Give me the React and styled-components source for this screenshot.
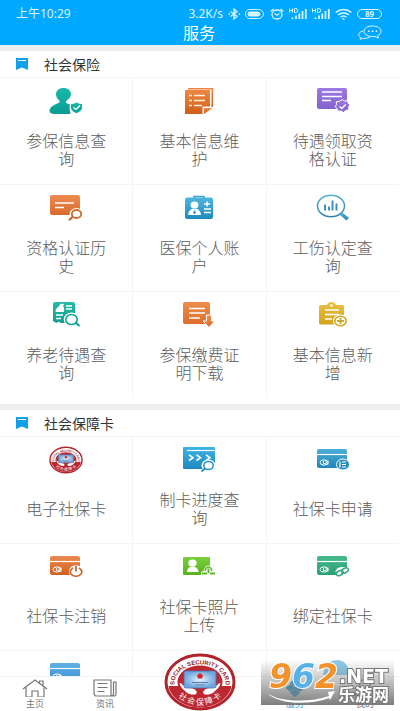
import React, { useId } from 'react';
import styled, { createGlobalStyle } from 'styled-components';

const colors = {
  primary: '#00a8ff',
  status: '#d9f6ff',
  page: '#eeeeee',
  line: '#f4f4f4',
  heading: '#333333',
  label: '#5c5c5c',
  tab: '#777777',
};

const GlobalStyle = createGlobalStyle`
  * {
    box-sizing: border-box;
  }
  body {
    margin: 0;
    font-family: 'Noto Sans CJK SC', 'Noto Sans', sans-serif;
  }
  button {
    border: 0;
    padding: 0;
    background: none;
    font: inherit;
    cursor: pointer;
  }
  svg {
    display: block;
    flex: none;
  }
`;

const StyledApp = styled.div`
  height: 100vh;
  display: flex;
  flex-direction: column;
  overflow: hidden;
  background: ${colors.page};
`;

const StyledHeader = styled.header`
  padding: 4px 18px 5px 16px;
  background: ${colors.primary};
  color: #fff;
`;

const StyledStatusBar = styled.div`
  height: 20px;
  display: flex;
  align-items: center;
  justify-content: space-between;
  color: ${colors.status};
  font-family: 'Noto Sans', 'Noto Sans CJK SC', sans-serif;
  font-size: 12px;
  line-height: 20px;
`;

const StyledStatusIcons = styled.div`
  display: flex;
  align-items: center;
  gap: 5px;
`;

const StyledBattery = styled.span`
  width: 25px;
  height: 10px;
  border: 1px solid ${colors.status};
  border-radius: 5px;
  font-size: 8px;
  font-weight: 700;
  line-height: 8px;
  text-align: center;
`;

const StyledTitleBar = styled.div`
  display: grid;
  grid-template-columns: 1fr auto 1fr;
  align-items: center;
  height: 16px;
`;

const StyledTitle = styled.h1`
  grid-column: 2;
  margin: 0;
  font-size: 16px;
  font-weight: 400;
  line-height: 16px;
`;

const StyledChatButton = styled.button`
  justify-self: end;
`;

const StyledMain = styled.main`
  flex: 1;
  min-height: 0;
  overflow-y: auto;
  scrollbar-width: none;
`;

const StyledSection = styled.section`
  margin-top: 6px;
  padding-bottom: 6px;
  background: #fff;
`;

const StyledSectionTitle = styled.h2`
  height: 26px;
  margin: 0;
  padding: 0 16px;
  display: flex;
  align-items: center;
  gap: 16px;
  color: ${colors.heading};
  font-size: 14px;
  font-weight: 400;
  line-height: 18px;
`;

const StyledGrid = styled.div`
  display: grid;
  grid-template-columns: repeat(3, 1fr);
  grid-auto-rows: 107px;
`;

const StyledService = styled.button`
  display: flex;
  flex-direction: column;
  align-items: center;
  padding: 9px 24px 0;
  border-top: 1px solid ${colors.line};
  border-right: 1px solid ${colors.line};
  &:nth-child(3n) {
    border-right-color: transparent;
  }
`;

const StyledLabel = styled.span`
  height: 68px;
  display: flex;
  align-items: center;
  color: ${colors.label};
  font-size: 16px;
  font-weight: 300;
  line-height: 18px;
`;

const StyledTabBar = styled.nav`
  position: relative;
  display: grid;
  grid-template-columns: 7fr 7fr 12fr 7fr 7fr;
  grid-template-rows: 34px;
  align-items: end;
  border-top: 1px solid ${colors.line};
  background: #fff;
`;

const StyledTab = styled.button`
  display: flex;
  flex-direction: column;
  align-items: center;
  color: ${({ $active }) => ($active ? '#1f9ed8' : colors.tab)};
  font-size: 9px;
  line-height: 14px;
`;

const StyledCardTab = styled.button`
  justify-self: center;
`;

const StyledWatermark = styled.div`
  position: fixed;
  right: 6px;
  bottom: 6px;
  pointer-events: none;
`;

const Fade = ({ id, from, to }) => (
  <linearGradient id={id} x1="0" y1="0" x2="0" y2="1">
    <stop offset="0" stopColor={from} />
    <stop offset="1" stopColor={to} />
  </linearGradient>
);

const Icon = ({ from, to, children }) => {
  const id = useId();
  return (
    <svg width="34" height="28" viewBox="0 0 34 28" fill="none" aria-hidden="true">
      <defs>
        <Fade id={id} from={from} to={to} />
      </defs>
      {children(`url(#${id})`)}
    </svg>
  );
};

const PersonIcon = () => (
  <Icon from="#19b9aa" to="#089c93">
    {fill => (
      <>
        <path
          d="M14.500 1C10 1 7 3.700 7 7.200c0 2.600 1.500 4.600 3.200 6.200.9.900.5 2-.7 2.500C4.500 18 .5 20 .5 24c0 2 2 3 5 3h16c-1-3-1-7.500-.5-9.500-2-.6-3.500-1.200-4-2-.4-.7 0-1.500.7-2.100C19.500 12 22 10 22 7.200 22 3.700 19 1 14.500 1z"
          fill={fill}
        />
        <path
          d="M27.500 15c2 1.300 4 1.700 6 1.700v3.500c0 3-2.500 5-6 6.300-3.500-1.300-6-3.300-6-6.300v-3.500c2 0 4-.4 6-1.700z"
          fill={fill}
          stroke="#fff"
          strokeWidth="1"
        />
        <path d="M24.500 20.500l2.500 2 4-4" stroke="#fff" strokeWidth="1.300" />
      </>
    )}
  </Icon>
);

const ListIcon = () => (
  <Icon from="#ee8741" to="#cf5f1b">
    {fill => (
      <>
        <path d="M6 1h25v19h-1.500V2.500H6z" fill={fill} />
        <path d="M3 3h25v16.500h-7.500V27H3z" fill={fill} />
        <path d="M22 21h8.500L22 27z" fill={fill} />
        <path
          d="M12 8.500h11M12 13.500h11M12 18.500h8M7 8.500h3M7 13.500h3M7 18.500h3"
          stroke="#fff0dc"
          strokeWidth="1.600"
        />
      </>
    )}
  </Icon>
);

const CertificateIcon = () => (
  <Icon from="#9c79e2" to="#8363cf">
    {fill => (
      <>
        <rect x="1" y="1" width="30" height="21" rx="2" fill={fill} />
        <path d="M6 5h20M6 9.500h20M6 13.500h9" stroke="#fff" strokeWidth="1.500" />
        <path
          d="M26.500 12.500l2 1.500 3-.5.5 2.500 2 2-1.300 2 .3 3-3 .4-2.500 2.100-2.500-1.500-3 .3-.7-2.700-2.300-1.900 1.500-2-.2-3 3-.3z"
          fill={fill}
          stroke="#fff"
        />
        <path d="M23.500 19.500l2.200 2 4-4" stroke="#fff" strokeWidth="1.300" />
      </>
    )}
  </Icon>
);

const HistoryIcon = () => (
  <Icon from="#ec8b50" to="#d96b2a">
    {fill => (
      <>
        <rect x="1" y="1" width="30" height="20" rx="2" fill={fill} />
        <path d="M6 9h19M6 13.500h9" stroke="#fff" strokeWidth="1.500" />
        <ellipse cx="27.500" cy="20" rx="7" ry="6" fill="#fff" />
        <ellipse cx="27.500" cy="20" rx="4.700" ry="4" stroke="#d06b2c" strokeWidth="1.800" />
        <path d="M23.500 23L20 26.300" stroke="#c9622a" strokeWidth="2.200" />
      </>
    )}
  </Icon>
);

const IdCardIcon = () => (
  <Icon from="#4fb5dd" to="#1e8abd">
    {fill => (
      <>
        <path d="M12 5V2.500h10V5" stroke="#3ea5d2" strokeWidth="1.600" />
        <rect x="3" y="3.500" width="28" height="21.500" rx="2" fill={fill} />
        <ellipse cx="12.500" cy="11" rx="4" ry="3.600" fill="#fff" />
        <path d="M6 21c.3-3.500 2.500-5.500 4.500-6.200h4c2.200.7 4.300 2.700 4.500 6.200z" fill="#fff" />
        <path d="M12.500 15.500l-1.500 3.300 1.500 1.500 1.500-1.500z" fill={fill} />
        <path d="M25 7.500v5M22 10h6M22 15h7M22 18.500h7" stroke="#fff" strokeWidth="1.500" />
      </>
    )}
  </Icon>
);

const InjuryIcon = () => (
  <Icon from="#57aed3" to="#2f86ae">
    {fill => (
      <>
        <ellipse cx="15" cy="12" rx="13.500" ry="10.800" stroke={fill} strokeWidth="1.500" />
        <path d="M24 20.500l2-1.500 6.500 4.800-2 2.200z" fill={fill} stroke={fill} />
        <path d="M9 10.500v6M13 12.500v4M16.500 6.500v10M20.500 9.500v7" stroke="#3b93bd" strokeWidth="2" />
      </>
    )}
  </Icon>
);

const PensionIcon = () => (
  <Icon from="#28bba7" to="#0d9e91">
    {fill => (
      <>
        <path d="M6 1h18a2 2 0 012 2v19H12l-2.500-1.500L7.500 22 4 20V3a2 2 0 012-2z" fill={fill} />
        <path
          d="M6.500 11c0-3 1.500-4.500 3.500-5.500 0-2 3-3.500 5-2.200l-1 1.700c1.500 1.500 1.200 3 1 6h-8z"
          fill="#fff"
        />
        <path d="M17 5h6M17 8h6M7 14h7M7 17.500h5" stroke="#fff" strokeWidth="1.300" />
        <ellipse cx="22.500" cy="18.500" rx="7.800" ry="7" fill="#fff" />
        <ellipse cx="22.500" cy="18.500" rx="5.700" ry="5" stroke="#12a295" strokeWidth="1.600" />
        <path d="M26.500 21.500l4 3.500" stroke="#12a295" strokeWidth="2.200" />
      </>
    )}
  </Icon>
);

const DownloadIcon = () => (
  <Icon from="#ee8e4c" to="#dd6d2b">
    {fill => (
      <>
        <rect x="1" y="1" width="27" height="22" rx="2" fill={fill} />
        <path d="M7 7.500h16M7 12h16M7 17h11" stroke="#fff" strokeWidth="1.600" />
        <path
          d="M24.500 14h5v6h3.500l-6 6.500-6-6.500h3.500z"
          fill={fill}
          stroke="#fff"
        />
      </>
    )}
  </Icon>
);

const AddIcon = () => (
  <Icon from="#e9c143" to="#d3a41f">
    {fill => (
      <>
        <path
          d="M5 4h6c1-1.800 2-3 4.500-3S19 2.200 20 4h6.500A1.500 1.500 0 0128 5.500v16a2 2 0 01-2 2H5a2 2 0 01-2-2v-15A2 2 0 015 4z"
          fill={fill}
        />
        <circle cx="15.500" cy="4.500" r="1.300" fill="#fff" />
        <path d="M9 9h14M9 13.500h14M9 18h7" stroke="#fff" strokeWidth="1.600" />
        <ellipse cx="24.500" cy="20" rx="7.600" ry="6.400" fill="#fff" />
        <ellipse cx="24.500" cy="20" rx="5.700" ry="4.800" stroke="#d2a523" strokeWidth="1.600" />
        <path d="M24.500 17v6M21 20h7" stroke="#d2a523" strokeWidth="1.800" />
      </>
    )}
  </Icon>
);

const ProgressIcon = () => (
  <Icon from="#3db4e2" to="#2088c2">
    {fill => (
      <>
        <rect x="1" y="1" width="32" height="22" rx="1" fill={fill} />
        <path d="M5 4.500h28" stroke="#fff" strokeWidth="1.200" />
        <path
          d="M7 9l4 2.700L7 14.500M14.500 9l4 2.700-4 2.800M24 9l4 2.700-4 2.800"
          stroke="#fff"
          strokeWidth="1.600"
        />
        <ellipse cx="26.500" cy="19.500" rx="7" ry="6" fill="#fff" />
        <ellipse cx="26.500" cy="19.500" rx="4.700" ry="4" stroke="#2992c5" strokeWidth="1.600" />
        <path d="M23 22.500l-3.500 3" stroke="#2992c5" strokeWidth="2" />
      </>
    )}
  </Icon>
);

const BankCardIcon = ({ from, to, children }) => (
  <Icon from={from} to={to}>
    {fill => (
      <>
        <rect x="1" y="3" width="30" height="19" rx="2" fill={fill} />
        <path d="M1 8.500h30" stroke="#fff" strokeWidth="1.200" />
        <ellipse cx="8" cy="16.500" rx="4" ry="2.600" stroke="#fff" />
        <path d="M7.500 15v2.500H10M9.500 14.500l2 4M12 14.500v4" stroke="#fff" strokeWidth=".9" />
        {children}
      </>
    )}
  </Icon>
);

const ApplyIcon = () => (
  <BankCardIcon from="#4ab0d8" to="#2384b8">
    <ellipse cx="27" cy="18.500" rx="6.500" ry="5.500" fill="#2a8bbd" stroke="#fff" />
    <path d="M24 15.500v6M26 16h4M26 18.500h4M26 21h4" stroke="#fff" strokeWidth="1.200" />
  </BankCardIcon>
);

const CancelIcon = () => (
  <BankCardIcon from="#e98a52" to="#d3601d">
    <ellipse cx="27" cy="18.500" rx="7.200" ry="6.300" fill="#fff" />
    <path d="M24 14.800c-6 4.200-1 8.400 3 8.400s9-4.200 3-8.400" stroke="#c9642b" strokeWidth="1.600" />
    <path d="M27 13v5.500" stroke="#c9642b" strokeWidth="1.800" />
  </BankCardIcon>
);

const BindIcon = () => (
  <BankCardIcon from="#46b98b" to="#27a274">
    <ellipse cx="26.500" cy="18.500" rx="7" ry="4.600" fill="#fff" />
    <g stroke="#3aa883" strokeWidth="1.500">
      <ellipse cx="23.800" cy="20" rx="3.700" ry="2.300" transform="rotate(-28 23.800 20)" />
      <ellipse cx="29" cy="17.500" rx="3.700" ry="2.300" transform="rotate(-28 29 17.500)" />
    </g>
  </BankCardIcon>
);

const PhotoIcon = () => (
  <Icon from="#79cf3c" to="#58b31f">
    {fill => (
      <>
        <rect x="1" y="4" width="27" height="18" rx="1" fill={fill} />
        <ellipse cx="10.500" cy="10" rx="4.200" ry="3.500" fill="#fff" />
        <path d="M5 19c0-3 2-5 4-5.500h3c2 .5 4.500 2.500 4.500 5.500z" fill="#fff" />
        <path d="M19 22v-3l3-1.500c0-3 2-5 4.500-5s4.500 2 4.500 5l2 1.500v3z" fill="#fff" />
        <path d="M23.500 18c-.5-2 1-4 3-4s3.500 2 3 4" stroke="#5fb62b" strokeWidth="1.500" />
        <path d="M26.500 20v-4.500M20 20.500h5M28 20.500h5" stroke="#5fb62b" strokeWidth="2" />
      </>
    )}
  </Icon>
);

const BlueCardIcon = () => <BankCardIcon from="#5fb0e4" to="#3a8fd0" />;

const Emblem = ({ width, height }) => {
  const id = useId();
  return (
    <svg
      width={width}
      height={height}
      viewBox="0 0 72 58"
      role="img"
      aria-label="社会保障卡"
    >
      <defs>
        <path id={`${id}top`} d="M11 34A25.500 19 0 1 1 61 34" />
        <path id={`${id}bottom`} d="M11 40A28.500 22.500 0 0 0 61 40" />
        <clipPath id={`${id}low`}>
          <path d="M0 33h72v25H0z" />
        </clipPath>
        <radialGradient id={`${id}card`}>
          <stop offset="0" stopColor="#e6f4fc" />
          <stop offset="1" stopColor="#6fa6dc" />
        </radialGradient>
      </defs>
      <ellipse cx="36" cy="29" rx="36" ry="29" fill="#fff" />
      <ellipse cx="36" cy="29" rx="34" ry="27" fill="#fff" stroke="#b2242c" strokeWidth="3" />
      <ellipse cx="36" cy="29" rx="32" ry="25.500" fill="#bd2730" clipPath={`url(#${id}low)`} />
      <ellipse
        cx="36"
        cy="29"
        rx="22.500"
        ry="16.500"
        fill="#bd2730"
      />
      <path
        d="M15.500 30c2 0 3 2 5 3.500 3 1.500 8 1 11 3.500 2 1.500 1.500 3 0 4.500-4 .5-8-.5-11-4-3-2-4.500-5-5-7.500zM56.500 30c-2 0-3 2-5 3.500-3 1.500-8 1-11 3.500-2 1.500-1.500 3 0 4.500 4 .5 8-.5 11-4 3-2 4.500-5 5-7.500z"
        fill="#fff"
      />
      <rect x="20" y="18" width="32" height="17" rx="2" fill={`url(#${id}card)`} stroke="#4773b5" strokeWidth=".8" />
      <path d="M36 20l3 2.500-1 3h-4l-1-3z" fill="#d5222c" />
      <path d="M28 29.500h16M31 32h10" stroke="#5b7fae" strokeWidth="1.200" />
      <text fill="#8f2026" fontFamily="Liberation Sans, sans-serif" fontSize="6" fontWeight="700">
        <textPath href={`#${id}top`} startOffset="50%" textAnchor="middle">
          SOCIAL SECURITY CARD
        </textPath>
      </text>
      <text fill="#fff" fontSize="8">
        <textPath href={`#${id}bottom`} startOffset="50%" textAnchor="middle">
          社 会 保 障 卡
        </textPath>
      </text>
    </svg>
  );
};

const CardEmblemIcon = () => <Emblem width={34} height={28} />;

const BookmarkIcon = () => (
  <svg width="12" height="12" viewBox="0 0 12 12" aria-hidden="true">
    <path d="M0 0h12v12L6 9.500 0 12z" fill="#12a1e6" />
    <path d="M2 2.500h8" stroke="#fff" />
  </svg>
);

const ChatIcon = () => (
  <svg width="24" height="15" viewBox="0 0 24 15" fill="none" stroke="#e6faff" aria-hidden="true">
    <path d="M14.500 1c5 0 8.500 2.200 8.500 5.200 0 2-1.300 3.500-3.300 4.400l.8 2.600-3.500-1.700c-6 .8-11-1.500-11-5.300C6 3.200 9.500 1 14.500 1z" />
    <path d="M5 6C2 6.700.7 8.300.7 9.700c0 1.200.6 2 1.800 2.700L2 14.300l3-1.100c2 .4 4.500.2 6.500-1" />
    <path d="M10 6.200h1.500M13.800 6.200h1.500M17.600 6.200h1.500" strokeWidth="1.500" />
  </svg>
);

const BluetoothIcon = () => (
  <svg width="12" height="12" viewBox="0 0 12 12" fill="none" stroke="currentColor" aria-hidden="true">
    <path d="M2.500 3.500L9 8.300 6 11V1l3 2.700-6.500 4.800M.5 6h1.500M10.500 6H12" strokeWidth="1.300" />
  </svg>
);

const PillIcon = () => (
  <svg width="20" height="12" viewBox="0 0 20 12" fill="none" stroke="currentColor" aria-hidden="true">
    <path d="M4.500 10.500h9a5 4.500 0 000-9h-4M4.500 1.500a4 4.500 0 000 9M4.500 1.500h5" />
    <rect x="3" y="4" width="12" height="4" rx="2" fill="currentColor" />
  </svg>
);

const AlarmIcon = () => (
  <svg width="14" height="12" viewBox="0 0 14 12" fill="none" stroke="currentColor" aria-hidden="true">
    <ellipse cx="7" cy="6.500" rx="5" ry="4.500" strokeWidth="1.300" />
    <path d="M.7 3.500L3.500 1M13.300 3.500L10.500 1M4.500 5.500L7 7.300l2.500-1.800" strokeWidth="1.200" />
  </svg>
);

const SignalIcon = () => (
  <svg width="18" height="12" viewBox="0 0 18 12" stroke="currentColor" aria-hidden="true">
    <path d="M3.500 11V9.500M7 11V7.500M10.300 11V5.500M13.500 11V3M16.800 11V1" strokeWidth="1.800" />
    <path d="M.5.500v4M3.500.500v4M.5 2.500h3M5.500.5v4h1.200a2 2 0 000-4H5.500" fill="none" />
  </svg>
);

const WifiIcon = () => (
  <svg width="17" height="12" viewBox="0 0 17 12" fill="none" stroke="currentColor" aria-hidden="true">
    <path d="M.7 4.500c4.500-4 11-4 15.600 0M3 7c3.200-2.700 7.800-2.700 11 0M5.500 9.300c1.800-1.600 4.200-1.600 6 0" strokeWidth="1.500" />
    <path d="M7.500 11h2" strokeWidth="1.500" />
  </svg>
);

const TabIcon = ({ children }) => (
  <svg width="26" height="20" viewBox="0 0 26 20" fill="none" stroke="currentColor" aria-hidden="true">
    {children}
  </svg>
);

const HomeIcon = () => (
  <TabIcon>
    <path d="M1 12L13 3l12 9M4 10.500V20h6v-6h6v6h6v-9.500M17.500 6V4H21v5" strokeWidth="1.200" />
  </TabIcon>
);

const NewsIcon = () => (
  <TabIcon>
    <path d="M2 3h17v16H4.500C3 19 2 18 2 16.500zM19 19h3.500c1 0 1.500-.7 1.500-1.500V5h-2.500v12c0 1.200-1 2-2.500 2" strokeWidth="1.200" />
    <path d="M5.500 6.500h10M5.500 10.500h10M5.500 14.500h7" strokeWidth="1.200" />
  </TabIcon>
);

const ServiceIcon = () => (
  <TabIcon>
    <path
      d="M4 11l4.500-3.500L13 11l-4.500 3.500zM13 11l4.500-3.500L22 11l-4.500 3.500zM8.500 6L13 2.500 17.500 6 13 9.500zM8.500 16l4.500-3.500 4.500 3.500-4.500 3.500z"
      fill="currentColor"
    />
  </TabIcon>
);

const MineIcon = () => (
  <TabIcon>
    <ellipse cx="13" cy="7" rx="5.500" ry="4.500" strokeWidth="1.200" />
    <path d="M3 19c0-4 4-7.500 10-7.500S23 15 23 19z" strokeWidth="1.200" />
  </TabIcon>
);

const Watermark = () => {
  const id = useId();
  return (
    <StyledWatermark>
      <svg width="133" height="45" viewBox="0 0 133 45" role="img" aria-label="962.NET 乐游网">
        <defs>
          <linearGradient id={id} x1="0" y1="0" x2="0" y2="1">
            <stop offset="0" stopColor="#777" stopOpacity="0" />
            <stop offset="1" stopColor="#777" stopOpacity=".95" />
          </linearGradient>
        </defs>
        <path d="M62 15C63 4 70 0 76 0s12 4 12 15z" fill="#8ccbed" />
        <path d="M0 0h133v45H0z" fill={`url(#${id})`} />
        <path
          d="M6 33c12 9 42 10 62 3l-1-4 7-1-5 9-1-2C46 46 17 44 6 33z"
          fill="#fff"
        />
        <g
          fontFamily="DejaVu Sans, sans-serif"
          fontWeight="700"
          stroke="#fff"
          strokeWidth="2"
          paintOrder="stroke"
        >
          <text x="8" y="28" fontSize="33" fontStyle="italic" fill="#f3922b">
            9<tspan fill="#58b1e6">6</tspan>2
          </text>
          <text x="78" y="23" fontSize="19" fill="#fff" stroke="#777">
            .NET
          </text>
        </g>
        <text
          x="77"
          y="41"
          fontSize="17"
          fontWeight="700"
          fill="#fff"
          stroke="#777"
          strokeWidth="2"
          paintOrder="stroke"
        >
          乐游网
        </text>
      </svg>
    </StyledWatermark>
  );
};

const sections = [
  {
    title: '社会保险',
    services: [
      { label: '参保信息查询', icon: PersonIcon },
      { label: '基本信息维护', icon: ListIcon },
      { label: '待遇领取资格认证', icon: CertificateIcon },
      { label: '资格认证历史', icon: HistoryIcon },
      { label: '医保个人账户', icon: IdCardIcon },
      { label: '工伤认定查询', icon: InjuryIcon },
      { label: '养老待遇查询', icon: PensionIcon },
      { label: '参保缴费证明下载', icon: DownloadIcon },
      { label: '基本信息新增', icon: AddIcon },
    ],
  },
  {
    title: '社会保障卡',
    services: [
      { label: '电子社保卡', icon: CardEmblemIcon },
      { label: '制卡进度查询', icon: ProgressIcon },
      { label: '社保卡申请', icon: ApplyIcon },
      { label: '社保卡注销', icon: CancelIcon },
      { label: '社保卡照片上传', icon: PhotoIcon },
      { label: '绑定社保卡', icon: BindIcon },
      { label: '', icon: BlueCardIcon },
      { label: '' },
      { label: '' },
    ],
  },
];

const ServiceSection = ({ title, services }) => (
  <StyledSection>
    <StyledSectionTitle>
      <BookmarkIcon />
      {title}
    </StyledSectionTitle>
    <StyledGrid>
      {services.map(({ label, icon: ServiceGlyph }, index) => (
        <StyledService key={label || index} type="button">
          {ServiceGlyph && <ServiceGlyph />}
          {label && <StyledLabel>{label}</StyledLabel>}
        </StyledService>
      ))}
    </StyledGrid>
  </StyledSection>
);

const App = () => (
  <StyledApp>
    <GlobalStyle />
    <StyledHeader>
      <StyledStatusBar>
        <span>上午10:29</span>
        <StyledStatusIcons>
          <span>3.2K/s</span>
          <BluetoothIcon />
          <PillIcon />
          <AlarmIcon />
          <SignalIcon />
          <SignalIcon />
          <WifiIcon />
          <StyledBattery>89</StyledBattery>
        </StyledStatusIcons>
      </StyledStatusBar>
      <StyledTitleBar>
        <StyledTitle>服务</StyledTitle>
        <StyledChatButton type="button" aria-label="消息">
          <ChatIcon />
        </StyledChatButton>
      </StyledTitleBar>
    </StyledHeader>
    <StyledMain>
      {sections.map(section => (
        <ServiceSection key={section.title} {...section} />
      ))}
    </StyledMain>
    <StyledTabBar>
      <StyledTab type="button">
        <HomeIcon />
        主页
      </StyledTab>
      <StyledTab type="button">
        <NewsIcon />
        资讯
      </StyledTab>
      <StyledCardTab type="button">
        <Emblem width={72} height={58} />
      </StyledCardTab>
      <StyledTab type="button" $active>
        <ServiceIcon />
        服务
      </StyledTab>
      <StyledTab type="button">
        <MineIcon />
        我的
      </StyledTab>
    </StyledTabBar>
    <Watermark />
  </StyledApp>
);

export default App;
